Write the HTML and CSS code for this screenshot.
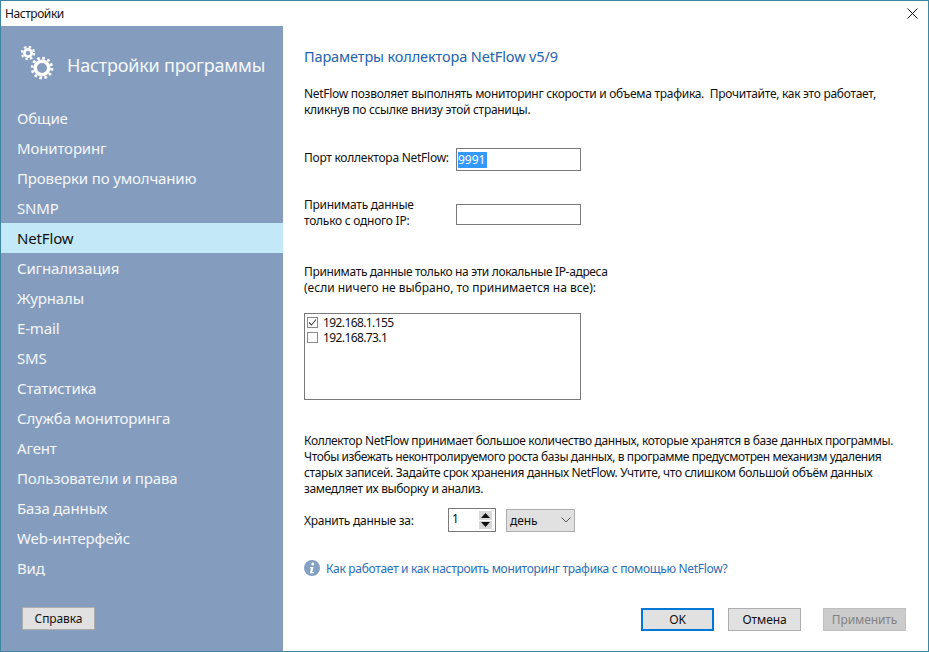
FILE: index.html
```html
<!DOCTYPE html>
<html lang="ru">
<head>
<meta charset="utf-8">
<title>Настройки</title>
<link rel="stylesheet" href="styles.css">
</head>
<body>
<div class="window">
  <div class="titlebar">
    <span class="title">Настройки</span>
    <svg class="close" width="11" height="11" viewBox="0 0 11 11"><path d="M.5.5l10 10M10.500.5l-10 10" stroke="#111" fill="none"/></svg>
  </div>
  <div class="main">
    <aside class="sidebar">
      <div class="brand">
        <svg class="gears" width="36" height="36" viewBox="0 0 36 36">
          <g fill="none" stroke="#fff">
            <circle cx="7" cy="9" r="3.600" stroke-width="2.800"/>
            <circle cx="7" cy="9" r="6.100" stroke-width="2.200" stroke-dasharray="2.400 2.390"/>
            <circle cx="21" cy="24" r="6.750" stroke-width="3.500"/>
            <circle cx="21" cy="24" r="9.900" stroke-width="2.800" stroke-dasharray="2.600 2.580"/>
          </g>
        </svg>
        <span class="brand-text">Настройки программы</span>
      </div>
      <nav class="nav">
        <div class="nav-item">Общие</div>
        <div class="nav-item">Мониторинг</div>
        <div class="nav-item">Проверки по умолчанию</div>
        <div class="nav-item">SNMP</div>
        <div class="nav-item active">NetFlow</div>
        <div class="nav-item">Сигнализация</div>
        <div class="nav-item">Журналы</div>
        <div class="nav-item">E-mail</div>
        <div class="nav-item">SMS</div>
        <div class="nav-item">Статистика</div>
        <div class="nav-item">Служба мониторинга</div>
        <div class="nav-item">Агент</div>
        <div class="nav-item">Пользователи и права</div>
        <div class="nav-item">База данных</div>
        <div class="nav-item">Web-интерфейс</div>
        <div class="nav-item">Вид</div>
      </nav>
      <button class="btn help">Справка</button>
    </aside>
    <section class="content">
      <h1 class="heading">Параметры коллектора NetFlow v5/9</h1>
      <p class="intro">NetFlow позволяет выполнять мониторинг скорости и объема трафика.&nbsp; Прочитайте, как это работает,<br>кликнув по ссылке внизу этой страницы.</p>
      <div class="row port-row">
        <label class="row-label port-label">Порт коллектора NetFlow:</label>
        <div class="input"><span class="selected">9991</span></div>
      </div>
      <div class="row ip-row">
        <label class="row-label">Принимать данные<br>только с одного IP:</label>
        <div class="input"></div>
      </div>
      <p class="local-text">Принимать данные только на эти локальные IP-адреса<br><span class="loose">(если ничего не выбрано, то принимается на все):</span></p>
      <div class="listbox">
        <div class="check-row">
          <svg class="check" width="11" height="11" viewBox="0 0 11 11"><rect x=".5" y=".5" width="10" height="10" fill="#fff" stroke="#8a8a8a"/><path d="M2 5.500l2.500 2.500 4.500-5.500" fill="none" stroke="#444" stroke-width="1.100"/></svg>
          <span>192.168.1.155</span>
        </div>
        <div class="check-row">
          <svg class="check" width="11" height="11" viewBox="0 0 11 11"><rect x=".5" y=".5" width="10" height="10" fill="#fff" stroke="#8a8a8a"/></svg>
          <span>192.168.73.1</span>
        </div>
      </div>
      <p class="desc">Коллектор NetFlow принимает большое количество данных, которые хранятся в базе данных программы.<br><span class="tight">Чтобы избежать неконтролируемого роста базы данных, в программе предусмотрен механизм удаления</span><br>старых записей. Задайте срок хранения данных NetFlow. Учтите, что слишком большой объём данных<br>замедляет их выборку и анализ.</p>
      <div class="keep-row">
        <label class="keep-label">Хранить данные за:</label>
        <div class="spin">
          <span class="spin-value">1</span>
          <div class="spin-btns">
            <div class="spin-btn"><svg width="9" height="5" viewBox="0 0 9 5"><path d="M4.500 0L9 5H0z" fill="#111"/></svg></div>
            <div class="spin-btn"><svg width="9" height="5" viewBox="0 0 9 5"><path d="M0 0h9L4.500 5z" fill="#111"/></svg></div>
          </div>
        </div>
        <div class="select">
          <span>день</span>
          <svg width="10" height="6" viewBox="0 0 10 6"><path d="M.5.500L5 5l4.500-4.500" fill="none" stroke="#555"/></svg>
        </div>
      </div>
      <div class="link-row">
        <svg width="16" height="16" viewBox="0 0 16 16"><circle cx="8" cy="8" r="8" fill="#84a0c2"/><circle cx="8.800" cy="3.900" r="1.500" fill="#fff"/><path d="M6 7h3.600l-1.300 5H10l-.3 1.300H5.800l1.200-5H5.700z" fill="#fff"/></svg>
        <a class="link">Как работает и как настроить мониторинг трафика с помощью NetFlow?</a>
      </div>
      <div class="actions">
        <button class="btn ok">OK</button>
        <button class="btn cancel">Отмена</button>
        <button class="btn apply">Применить</button>
      </div>
    </section>
  </div>
</div>
</body>
</html>
```
FILE: styles.css
```css
* { box-sizing: border-box; }
html, body { margin: 0; padding: 0; }
body {
  width: 929px;
  height: 652px;
  overflow: hidden;
  font-family: "Noto Sans", "Open Sans", sans-serif;
  font-size: 12px;
  color: #111;
  background: #fff;
}
.window {
  width: 929px;
  height: 652px;
  border: 1px solid #3f86a3;
  display: flex;
  flex-direction: column;
}
.titlebar {
  height: 25px;
  flex: none;
  display: flex;
  align-items: center;
  justify-content: space-between;
  padding: 0 10px 0 4px;
}
.title { font-size: 12px; letter-spacing: -.44px; }
.main { flex: 1; display: flex; min-height: 0; }
.sidebar {
  width: 282px;
  flex: none;
  background: #849dbe;
  display: flex;
  flex-direction: column;
  color: #fff;
}
.brand {
  height: 77px;
  flex: none;
  display: flex;
  align-items: flex-start;
  padding: 18px 0 0 20px;
}
.gears { flex: none; }
.brand-text {
  font-size: 18px;
  margin: 9px 0 0 10px;
  line-height: 24px;
  letter-spacing: -.18px;
  white-space: nowrap;
  color: #f6f8fb;
}
.nav { display: flex; flex-direction: column; }
.nav-item {
  height: 30px;
  line-height: 30px;
  padding-left: 16px;
  font-size: 15px;
  letter-spacing: -.15px;
  color: #f4f6fa;
}
.nav-item.active { background: #c3e8f8; color: #111; }
.btn {
  font-family: inherit;
  font-size: 12px;
  letter-spacing: -.1px;
  height: 23px;
  width: 73px;
  padding: 0;
  background: #e1e1e1;
  border: 1px solid #adadad;
  color: #111;
}
.help { margin: 24px 0 0 21px; }
.content {
  flex: 1;
  min-width: 0;
  padding: 20px 22px 0 21px;
  display: flex;
  flex-direction: column;
}
.heading {
  margin: 0;
  font-size: 14.500px;
  font-weight: 400;
  line-height: 20px;
  letter-spacing: -.13px;
  color: #2463ad;
}
.row-label, .keep-label { letter-spacing: -.26px; }
.intro { margin: 20px 0 0; line-height: 16px; white-space: nowrap; letter-spacing: -.29px; }
.row { display: flex; }
.row-label { width: 152px; flex: none; line-height: 16px; }
.port-label { margin-top: -3px; }
.input {
  width: 125px;
  height: 23px;
  border: 1px solid #7a7a7a;
  padding: 3px 0 0 1px;
  font-size: 12px;
  line-height: 16px;
}
.selected { display: inline-block; background: #3399ff; color: #fff; line-height: 16px; padding-right: 2px; }
.port-row { margin-top: 30px; align-items: center; }
.ip-row { margin-top: 26px; align-items: flex-start; height: 32px; }
.ip-row .input { height: 21px; margin-top: 7px; }
.local-text { margin: 35px 0 0; line-height: 16px; letter-spacing: -.35px; white-space: nowrap; }
.loose { letter-spacing: 0; }
.listbox {
  width: 277px;
  height: 87px;
  margin-top: 17px;
  border: 1px solid #7a7a7a;
  padding: 1px 0 0 2px;
}
.check-row { display: flex; align-items: center; height: 15px; line-height: 15px; gap: 5px; letter-spacing: -.6px; }
.check { flex: none; }
.desc { margin: 33px 0 0; line-height: 16px; white-space: nowrap; letter-spacing: -.35px; }
.tight { letter-spacing: -.42px; }
.keep-row { display: flex; align-items: center; margin-top: 11px; }
.keep-label { width: 144px; flex: none; }
.spin {
  width: 48px;
  height: 24px;
  border: 1px solid #7a7a7a;
  display: flex;
  justify-content: space-between;
  padding: 2px 3px 2px 3px;
}
.spin-value { line-height: 15px; font-size: 12px; }
.spin-btns { display: flex; flex-direction: column; gap: 1px; }
.spin-btn {
  width: 13px;
  flex: 1;
  background: #d9d9d9;
  display: flex;
  align-items: center;
  justify-content: center;
}
.select {
  width: 69px;
  height: 23px;
  margin-left: 10px;
  background: #e1e1e1;
  border: 1px solid #adadad;
  display: flex;
  align-items: center;
  justify-content: space-between;
  padding: 0 3px 0 3px;
  letter-spacing: -.1px;
}
.link-row { display: flex; align-items: center; gap: 6px; margin-top: 27px; height: 18px; }
.link { color: #2a6db8; white-space: nowrap; letter-spacing: -.31px; }
.actions { display: flex; justify-content: flex-end; margin-top: 31px; }
.ok { border: 2px solid #0078d7; }
.cancel { margin-left: 14px; }
.apply { margin-left: 22px; background: #cccccc; border-color: #bfbfbf; color: #838383; width: 83px; }
```
